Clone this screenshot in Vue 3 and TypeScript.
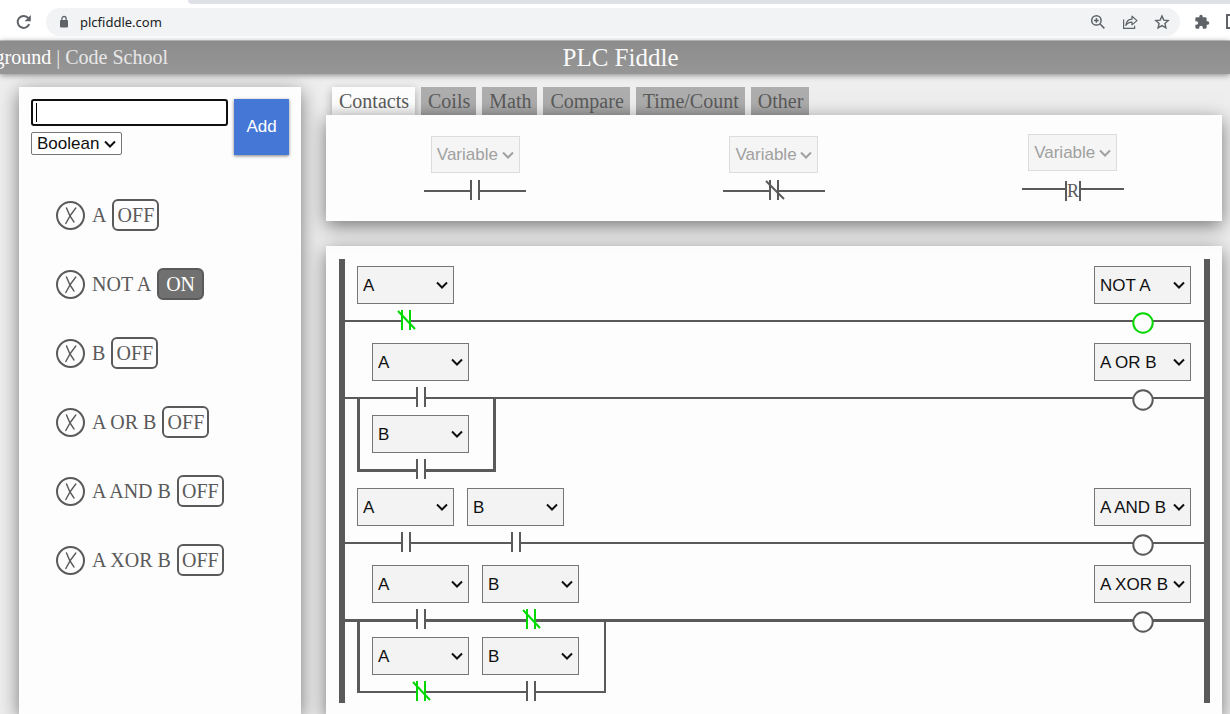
<script setup lang="ts">
import { ref } from 'vue'

type Kind = 'open' | 'closed'
interface Contact { name: string; kind: Kind; live?: boolean }
interface Rung { coil: string; live?: boolean; heavyWire?: boolean; heavyLoop?: boolean; rows: Contact[][] }
interface Variable { name: string; on: boolean }

const variables = ref<Variable[]>([
  { name: 'A', on: false },
  { name: 'NOT A', on: true },
  { name: 'B', on: false },
  { name: 'A OR B', on: false },
  { name: 'A AND B', on: false },
  { name: 'A XOR B', on: false },
])
const newName = ref('')
const newType = ref('Boolean')
const tabs = ['Contacts', 'Coils', 'Math', 'Compare', 'Time/Count', 'Other']
const activeTab = ref('Contacts')
const palette = ['open', 'closed', 'rising']

const rungs = ref<Rung[]>([
  { coil: 'NOT A', live: true, rows: [[{ name: 'A', kind: 'closed', live: true }]] },
  { coil: 'A OR B', heavyLoop: true, rows: [[{ name: 'A', kind: 'open' }], [{ name: 'B', kind: 'open' }]] },
  { coil: 'A AND B', rows: [[{ name: 'A', kind: 'open' }, { name: 'B', kind: 'open' }]] },
  {
    coil: 'A XOR B',
    heavyWire: true,
    rows: [
      [{ name: 'A', kind: 'open' }, { name: 'B', kind: 'closed', live: true }],
      [{ name: 'A', kind: 'closed', live: true }, { name: 'B', kind: 'open' }],
    ],
  },
])

function addVariable() {
  const name = newName.value.trim()
  if (name) variables.value.push({ name, on: false })
  newName.value = ''
}
function removeVariable(index: number) {
  variables.value.splice(index, 1)
}
</script>

<template>
  <div class="screen">
    <div class="strip"><div class="strip-tab"></div><div class="strip-rest"></div></div>
    <div class="toolbar">
      <button class="icon-btn" aria-label="Reload">
        <svg width="16" height="16" viewBox="0 0 16 16"><path d="M13.2 10.2A6 6 0 1 1 12.4 4.2" fill="none" stroke="#5f6368" stroke-width="2" /><path d="M14.8 1v6.2H8.6z" fill="#5f6368" /></svg>
      </button>
      <div class="address">
        <svg width="10" height="14" viewBox="0 0 10 14"><rect x="1" y="5" width="8" height="7.6" rx="1" fill="#5f6368" /><path d="M2.9 5.5V3.6a2.1 2.1 0 0 1 4.2 0v1.9" fill="none" stroke="#5f6368" stroke-width="1.3" /></svg>
        <span class="url">plcfiddle.com</span>
        <button class="icon-btn" aria-label="Zoom">
          <svg width="16" height="16" viewBox="0 0 16 16" fill="none" stroke="#5f6368" stroke-width="1.5"><circle cx="6.4" cy="6.4" r="4.7" /><path d="M9.8 9.8l4.6 4.6M4 6.4h4.8M6.4 4v4.8" /></svg>
        </button>
        <button class="icon-btn" aria-label="Share">
          <svg width="16" height="16" viewBox="0 0 16 16" fill="none" stroke="#5f6368" stroke-width="1.2"><path d="M1.6 5.5v8.9h11v-2.6" /><path d="M3.8 11.4c.4-3.7 2.6-6 6.2-6.2V2.2l5 4.4-5 4.3V8.2c-2.8 0-4.7 1-6.2 3.2z" stroke-linejoin="round" /></svg>
        </button>
        <button class="icon-btn" aria-label="Bookmark">
          <svg width="16" height="16" viewBox="0 0 16 16"><path d="M8 2l1.8 4.1 4.4.4-3.3 3 1 4.4L8 11.6l-3.9 2.3 1-4.4-3.3-3 4.4-.4z" fill="none" stroke="#5f6368" stroke-width="1.4" /></svg>
        </button>
      </div>
      <div class="extensions">
        <button class="icon-btn" aria-label="Extensions">
          <svg width="16" height="16" viewBox="0 0 24 24"><path d="M20.5 11H19V7a2 2 0 0 0-2-2h-4V3.500a2.500 2.500 0 0 0-5 0V5H4a2 2 0 0 0-2 2v3.800h1.500a2.700 2.700 0 0 1 0 5.400H2V20a2 2 0 0 0 2 2h3.800v-1.500a2.700 2.700 0 0 1 5.400 0V22H17a2 2 0 0 0 2-2v-4h1.500a2.500 2.500 0 0 0 0-5z" fill="#5f6368" /></svg>
        </button>
        <button class="icon-btn" aria-label="Side panel">
          <svg width="16" height="16" viewBox="0 0 16 16"><rect x="1" y="1" width="14" height="13" fill="none" stroke="#5f6368" stroke-width="2" /></svg>
        </button>
      </div>
    </div>

    <header class="header">
      <nav class="nav"><a href="#playground" class="current">Playground</a> | <a href="#school">Code School</a></nav>
      <h1>PLC Fiddle</h1>
    </header>

    <div class="workspace">
      <aside class="card sidebar">
        <form class="add-form" @submit.prevent="addVariable">
          <div class="fields">
            <input v-model="newName" type="text" aria-label="Variable name" />
            <div class="picker small">
              <select v-model="newType" aria-label="Variable type"><option>Boolean</option><option>Number</option></select>
              <svg class="chevron" width="12" height="8" viewBox="0 0 12 8"><path d="M1 1.500l5 5 5-5" /></svg>
            </div>
          </div>
          <button type="submit" class="add">Add</button>
        </form>
        <ul class="variables">
          <li v-for="(v, i) in variables" :key="v.name">
            <button class="remove" :aria-label="'Remove ' + v.name" @click="removeVariable(i)">
              <svg width="29" height="29" viewBox="0 0 29 29"><circle cx="14.500" cy="14.500" r="13.500" stroke-width="2" /><path d="M10.500 7c1 3 3.500 9 7.500 14M19.800 7c-2.500 3-7 9-10 15.500" stroke-width="1.400" stroke-linecap="round" /></svg>
            </button>
            <span>{{ v.name }}</span>
            <button class="state" :class="{ on: v.on }" @click="v.on = !v.on">{{ v.on ? 'ON' : 'OFF' }}</button>
          </li>
        </ul>
      </aside>

      <main class="main">
        <div class="tabs" role="tablist">
          <button v-for="t in tabs" :key="t" role="tab" :aria-selected="t === activeTab" :class="{ active: t === activeTab }" @click="activeTab = t">{{ t }}</button>
        </div>
        <section class="card palette">
          <div v-for="p in palette" :key="p" class="element">
            <div class="picker faded">
              <select disabled :aria-label="p + ' contact variable'"><option>Variable</option></select>
              <svg class="chevron" width="12" height="8" viewBox="0 0 12 8"><path d="M1 1.500l5 5 5-5" /></svg>
            </div>
            <svg v-if="p === 'rising'" class="symbol" width="102" height="24" viewBox="0 0 102 24">
              <path d="M0 11h44M59 11h43M44 3v20M58 3v20" /><text x="51" y="19" text-anchor="middle">R</text>
            </svg>
            <svg v-else class="symbol" width="102" height="20" viewBox="0 0 102 20">
              <path d="M0 11h47M55 11h47M47 0v20M55 0v20" /><path v-if="p === 'closed'" d="M43 1l18 18" />
            </svg>
          </div>
        </section>

        <section class="card ladder">
          <div class="rails">
            <div v-for="(r, i) in rungs" :key="i" class="rung">
              <div class="wire" :class="{ heavy: r.heavyWire }"></div>
              <div class="contents">
                <div class="group" :class="{ branched: r.rows.length > 1 }">
                  <div v-if="r.rows.length > 1" class="loop" :class="{ heavy: r.heavyLoop }"></div>
                  <div class="rows">
                    <div v-for="(row, j) in r.rows" :key="j" class="row">
                      <div v-for="(c, k) in row" :key="k" class="element">
                        <div class="picker">
                          <select v-model="c.name" aria-label="Contact variable"><option v-for="v in variables" :key="v.name">{{ v.name }}</option></select>
                          <svg class="chevron" width="12" height="8" viewBox="0 0 12 8"><path d="M1 1.500l5 5 5-5" /></svg>
                        </div>
                        <svg class="symbol" :class="{ live: c.live }" width="20" height="20" viewBox="0 0 20 20">
                          <rect x="6" width="8" height="20" /><path d="M6 0v20M14 0v20" /><path v-if="c.kind === 'closed'" d="M2 1l17 18" />
                        </svg>
                      </div>
                    </div>
                  </div>
                </div>
                <div class="element output">
                  <div class="picker">
                    <select v-model="r.coil" aria-label="Coil variable"><option v-for="v in variables" :key="v.name">{{ v.name }}</option></select>
                    <svg class="chevron" width="12" height="8" viewBox="0 0 12 8"><path d="M1 1.500l5 5 5-5" /></svg>
                  </div>
                  <svg class="symbol" :class="{ live: r.live }" width="22" height="22" viewBox="0 0 22 22"><circle cx="11" cy="11" r="9.700" /></svg>
                </div>
              </div>
            </div>
          </div>
        </section>
      </main>
    </div>
  </div>
</template>

<style>
body { margin: 0; background: #eee; }
</style>

<style scoped>
* { box-sizing: border-box; }
button, input, select { margin: 0; font-family: "Liberation Sans", Arial, sans-serif; font-size: 17px; }
.screen {
  display: flex; flex-direction: column; height: 100vh; overflow: hidden;
  background: #eee; color: #5a5a5a; font-family: "Liberation Serif", "Times New Roman", serif; font-size: 20px;
}
svg { display: block; flex: none; }

.strip { display: flex; flex: none; height: 4px; background: #fff; }
.strip-tab { width: 188px; }
.strip-rest { flex: 1; background: #dee1e6; border-bottom-left-radius: 6px; }
.toolbar { display: flex; flex: none; align-items: center; gap: 14px; height: 37px; padding: 0 0 1px 16px; background: #fff; border-bottom: 1px solid #cfcfcf; }
.icon-btn { padding: 0; border: 0; background: none; }
.address { display: flex; flex: 1; align-items: center; gap: 16px; height: 28px; padding: 0 10px 0 13px; border-radius: 14px; background: #f1f3f4; }
.url { flex: 1; margin-left: -5px; color: #202124; font: 13px/20px "Noto Sans", "Open Sans", sans-serif; }
.extensions { display: flex; gap: 16px; margin-right: -12px; }

.header {
  display: grid; grid-template-columns: 1fr auto 1fr; flex: none; align-items: center; height: 33px; padding-left: 11px;
  background: linear-gradient(#8c8c8c, #969696); box-shadow: 0 1px 6px rgba(0, 0, 0, .45); color: #e8e8e8; z-index: 1;
}
.nav { margin-left: -52px; }
.nav a { color: inherit; text-decoration: none; }
.nav .current { color: #fff; }
h1 { grid-column: 2; margin: 0; color: #fafafa; font-size: 25px; font-weight: 400; line-height: 33px; }

.workspace { display: flex; flex: 1; gap: 25px; min-height: 0; padding: 13px 8px 0 19px; }
.card { background: #fdfdfd; box-shadow: 0 5px 18px rgba(0, 0, 0, .5); }
.sidebar { flex: none; width: 282px; padding: 12px; }
.add-form { display: flex; gap: 6px; }
.fields { display: flex; flex: 1; flex-direction: column; align-items: flex-start; gap: 6px; min-width: 0; }
input {
  width: 100%; height: 27px; padding: 0 5px; border: 2px solid #101010; border-radius: 3px; outline: 0; caret-color: transparent;
  background: linear-gradient(#000, #000) 3px center / 1px 19px no-repeat #fff;
}
.add { width: 55px; height: 56px; padding: 0; border: 0; background: #4577d6; box-shadow: 0 1px 3px rgba(0, 0, 0, .5); color: #fff; }
.variables { display: flex; flex-direction: column; gap: 37px; margin: 44px 0 0; padding: 0 0 0 25px; list-style: none; }
.variables li { display: flex; align-items: center; gap: 6px; height: 32px; }
.remove { margin-right: 1px; padding: 0; border: 0; background: none; }
.remove svg { fill: none; stroke: #5a5a5a; }
.state { min-width: 47px; height: 32px; padding: 0 3px; border: 2px solid #5a5a5a; border-radius: 6px; background: none; color: #5a5a5a; font-family: inherit; font-size: 20px; }
.state.on { background: #707070; color: #fff; }

.picker { display: grid; align-items: center; width: 97px; height: 38px; }
.picker > * { grid-area: 1 / 1; }
select { width: 100%; height: 100%; padding: 0 5px; appearance: none; border: 1px solid #767676; border-radius: 0; background: #f3f3f3; color: #101010; }
.chevron { justify-self: end; margin-right: 6px; fill: none; stroke: #101010; stroke-width: 2; pointer-events: none; }
.small { width: 91px; height: 23px; }
.small select { background: #fff; border-radius: 2px; }
.faded { width: 89px; height: 37px; }
.faded select { border-color: #dcdcdc; background: #f5f5f5; color: #a0a0a0; opacity: 1; }
.faded .chevron { stroke: #a0a0a0; }

.main { flex: 1; min-width: 0; }
.tabs { display: flex; gap: 6px; padding-left: 6px; }
.tabs button { height: 28px; padding: 0 6px 0 7px; border: 0; background: linear-gradient(#adadad 60%, #a0a0a0); color: #5a5a5a; font-family: inherit; font-size: 20px; }
.tabs .active { background: linear-gradient(#fdfdfd 60%, #f0f0f0); box-shadow: 0 3px 10px rgba(0, 0, 0, .3); }
.palette { position: relative; display: grid; grid-template-columns: repeat(3, 1fr); align-items: center; height: 106px; margin-bottom: 25px; }
.element { display: flex; flex-direction: column; align-items: center; gap: 6px; }
.palette .element { gap: 7px; }
.symbol { fill: none; stroke: #5a5a5a; stroke-width: 2; }
.symbol rect, .symbol circle { fill: #fdfdfd; }
.symbol rect { stroke: none; }
.symbol text { fill: #5a5a5a; stroke: none; font-size: 18px; }
.live { stroke: #00d800; }

.ladder { padding: 13px 12px 13px 13px; }
.rails { border: solid #5a5a5a; border-width: 0 6px; }
.rung { display: grid; }
.rung > * { grid-area: 1 / 1; }
.wire { height: 2px; margin-top: 61px; background: #5a5a5a; }
.wire.heavy { height: 3px; }
.contents { display: flex; justify-content: space-between; align-items: flex-start; padding: 7px 6px 2px; }
.group { display: grid; }
.group > * { grid-area: 1 / 1; }
.branched { margin: 0 6px; }
.branched .rows { padding: 0 20px 0 9px; }
.rows { display: flex; flex-direction: column; gap: 8px; }
.row { display: flex; }
.row .element, .output { width: 110px; padding-right: 1px; }
.output { gap: 8px; }
.loop { margin: 54px 0 8px; border: solid #5a5a5a; border-width: 0 2px 2px 3px; }
.loop.heavy { margin-bottom: 7px; border-width: 0 3px 3px; }
</style>
